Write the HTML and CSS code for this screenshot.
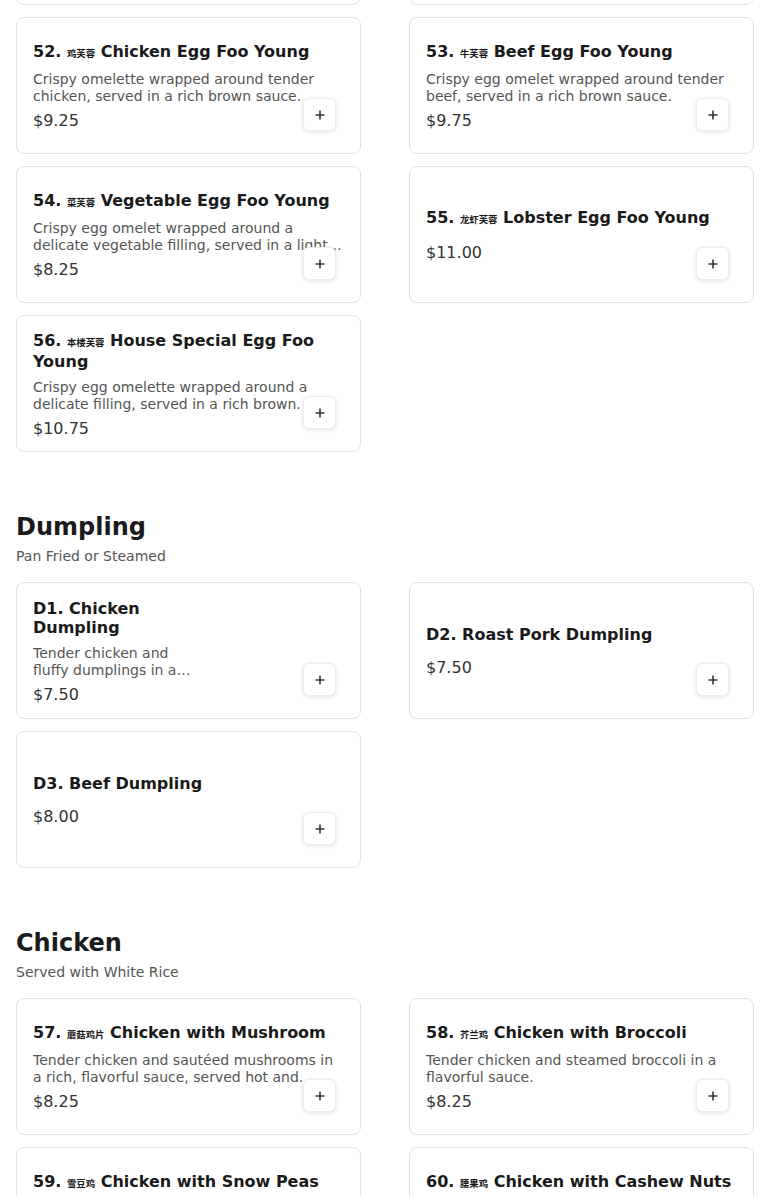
FILE: index.html
```html
<!DOCTYPE html>
<html lang="en">
<head>
    <meta charset="UTF-8">
    <meta name="viewport" content="width=device-width, initial-scale=1.0">
    <title>Menu</title>
    <link rel="stylesheet" href="styles.css">
</head>
<body>
    <main class="menu">
        <section class="menu-section">
            <div class="section-head">
                <h2>Egg Foo Young</h2>
                <p>Served with White Rice</p>
            </div>
            <div class="item-grid">
                <article class="item">
                    <div class="item-info">
                        <h3 class="item-name">50. <span class="zh">虾芙蓉</span> Shrimp Egg Foo Young</h3>
                        <p class="item-desc">Crispy egg omelet wrapped around tender shrimp, served in a rich brown sauce.</p>
                        <div class="item-price">$9.75</div>
                    </div>
                    <button class="add-btn" aria-label="Add"><svg viewBox="0 0 10 10"><path d="M5 0.5v9M0.5 5h9"/></svg></button>
                </article>
                <article class="item">
                    <div class="item-info">
                        <h3 class="item-name">51. <span class="zh">叉烧芙蓉</span> Roast Pork Egg Foo Young</h3>
                        <p class="item-desc">Crispy egg omelet wrapped around roast pork, served in a rich brown sauce.</p>
                        <div class="item-price">$9.25</div>
                    </div>
                    <button class="add-btn" aria-label="Add"><svg viewBox="0 0 10 10"><path d="M5 0.5v9M0.5 5h9"/></svg></button>
                </article>
                <article class="item">
                    <div class="item-info">
                        <h3 class="item-name">52. <span class="zh">鸡芙蓉</span> Chicken Egg Foo Young</h3>
                        <p class="item-desc">Crispy omelette wrapped around tender chicken, served in a rich brown sauce.</p>
                        <div class="item-price">$9.25</div>
                    </div>
                    <button class="add-btn" aria-label="Add"><svg viewBox="0 0 10 10"><path d="M5 0.5v9M0.5 5h9"/></svg></button>
                </article>
                <article class="item">
                    <div class="item-info">
                        <h3 class="item-name">53. <span class="zh">牛芙蓉</span> Beef Egg Foo Young</h3>
                        <p class="item-desc">Crispy egg omelet wrapped around tender beef, served in a rich brown sauce.</p>
                        <div class="item-price">$9.75</div>
                    </div>
                    <button class="add-btn" aria-label="Add"><svg viewBox="0 0 10 10"><path d="M5 0.5v9M0.5 5h9"/></svg></button>
                </article>
                <article class="item">
                    <div class="item-info">
                        <h3 class="item-name">54. <span class="zh">菜芙蓉</span> Vegetable Egg Foo Young</h3>
                        <p class="item-desc">Crispy egg omelet wrapped around a delicate vegetable filling, served in a light brown sauce.</p>
                        <div class="item-price">$8.25</div>
                    </div>
                    <button class="add-btn" aria-label="Add"><svg viewBox="0 0 10 10"><path d="M5 0.5v9M0.5 5h9"/></svg></button>
                </article>
                <article class="item">
                    <div class="item-info">
                        <h3 class="item-name">55. <span class="zh">龙虾芙蓉</span> Lobster Egg Foo Young</h3>
                        <div class="item-price">$11.00</div>
                    </div>
                    <button class="add-btn" aria-label="Add"><svg viewBox="0 0 10 10"><path d="M5 0.5v9M0.5 5h9"/></svg></button>
                </article>
                <article class="item">
                    <div class="item-info">
                        <h3 class="item-name">56. <span class="zh">本楼芙蓉</span> House Special Egg Foo Young</h3>
                        <p class="item-desc">Crispy egg omelette wrapped around a delicate filling, served in a rich brown.</p>
                        <div class="item-price">$10.75</div>
                    </div>
                    <button class="add-btn" aria-label="Add"><svg viewBox="0 0 10 10"><path d="M5 0.5v9M0.5 5h9"/></svg></button>
                </article>
            </div>
        </section>

        <section class="menu-section">
            <div class="section-head">
                <h2>Dumpling</h2>
                <p>Pan Fried or Steamed</p>
            </div>
            <div class="item-grid">
                <article class="item">
                    <div class="item-info item-info--narrow">
                        <h3 class="item-name">D1. Chicken Dumpling</h3>
                        <p class="item-desc">Tender chicken and fluffy dumplings in a savory, comforting broth.</p>
                        <div class="item-price">$7.50</div>
                    </div>
                    <button class="add-btn" aria-label="Add"><svg viewBox="0 0 10 10"><path d="M5 0.5v9M0.5 5h9"/></svg></button>
                </article>
                <article class="item">
                    <div class="item-info">
                        <h3 class="item-name">D2. Roast Pork Dumpling</h3>
                        <div class="item-price">$7.50</div>
                    </div>
                    <button class="add-btn" aria-label="Add"><svg viewBox="0 0 10 10"><path d="M5 0.5v9M0.5 5h9"/></svg></button>
                </article>
                <article class="item">
                    <div class="item-info">
                        <h3 class="item-name">D3. Beef Dumpling</h3>
                        <div class="item-price">$8.00</div>
                    </div>
                    <button class="add-btn" aria-label="Add"><svg viewBox="0 0 10 10"><path d="M5 0.5v9M0.5 5h9"/></svg></button>
                </article>
            </div>
        </section>

        <section class="menu-section">
            <div class="section-head">
                <h2>Chicken</h2>
                <p>Served with White Rice</p>
            </div>
            <div class="item-grid">
                <article class="item">
                    <div class="item-info">
                        <h3 class="item-name">57. <span class="zh">蘑菇鸡片</span> Chicken with Mushroom</h3>
                        <p class="item-desc">Tender chicken and sautéed mushrooms in a rich, flavorful sauce, served hot and.</p>
                        <div class="item-price">$8.25</div>
                    </div>
                    <button class="add-btn" aria-label="Add"><svg viewBox="0 0 10 10"><path d="M5 0.5v9M0.5 5h9"/></svg></button>
                </article>
                <article class="item">
                    <div class="item-info">
                        <h3 class="item-name">58. <span class="zh">芥兰鸡</span> Chicken with Broccoli</h3>
                        <p class="item-desc">Tender chicken and steamed broccoli in a flavorful sauce.</p>
                        <div class="item-price">$8.25</div>
                    </div>
                    <button class="add-btn" aria-label="Add"><svg viewBox="0 0 10 10"><path d="M5 0.5v9M0.5 5h9"/></svg></button>
                </article>
                <article class="item">
                    <div class="item-info">
                        <h3 class="item-name">59. <span class="zh">雪豆鸡</span> Chicken with Snow Peas</h3>
                        <p class="item-desc">Tender chicken stir-fried with crisp snow peas in a light white sauce.</p>
                        <div class="item-price">$8.25</div>
                    </div>
                    <button class="add-btn" aria-label="Add"><svg viewBox="0 0 10 10"><path d="M5 0.5v9M0.5 5h9"/></svg></button>
                </article>
                <article class="item">
                    <div class="item-info">
                        <h3 class="item-name">60. <span class="zh">腰果鸡</span> Chicken with Cashew Nuts</h3>
                        <p class="item-desc">Tender chicken and crunchy cashew nuts in a savory brown sauce.</p>
                        <div class="item-price">$8.25</div>
                    </div>
                    <button class="add-btn" aria-label="Add"><svg viewBox="0 0 10 10"><path d="M5 0.5v9M0.5 5h9"/></svg></button>
                </article>
            </div>
        </section>
    </main>
</body>
</html>
```

FILE: styles.css
```css
body {
    margin: 0;
    background: #fff;
    font-family: "DejaVu Sans", "Noto Sans CJK SC", sans-serif;
    color: #1a1a1a;
}

/* page is scrolled part way into the Egg Foo Young section */
.menu {
    padding: 0 16px;
    margin-top: -201px;
}

.menu-section + .menu-section {
    margin-top: 61px;
}

.section-head {
    margin-bottom: 17px;
}

.section-head h2 {
    margin: 0 0 6px;
    font-size: 24px;
    line-height: 29px;
    font-weight: 700;
    color: #1a1a1a;
}

.section-head p {
    margin: 0;
    font-size: 14px;
    line-height: 17px;
    color: #555;
}

.item-grid {
    display: grid;
    grid-template-columns: 1fr 1fr;
    column-gap: 48px;
    row-gap: 12px;
}

.item {
    position: relative;
    box-sizing: border-box;
    height: 137px;
    padding: 0 16px;
    display: flex;
    flex-direction: column;
    justify-content: center;
    background: #fff;
    border: 1px solid #e3e3e3;
    border-radius: 8px;
}

.item-info {
    display: flex;
    flex-direction: column;
    gap: 8px;
}

.item-info--narrow {
    max-width: 170px;
}

.item-name {
    margin: 0;
    font-size: 16px;
    line-height: 19px;
    font-weight: 700;
    color: #1a1a1a;
}

.zh {
    font-size: 9.4px;
}

.item-desc {
    margin: 0;
    font-size: 14px;
    line-height: 17px;
    color: #555;
    display: -webkit-box;
    -webkit-line-clamp: 2;
    -webkit-box-orient: vertical;
    overflow: hidden;
}

.item-price {
    font-size: 16px;
    line-height: 16px;
    color: #333;
}

/* no description: keep the price a little further down */
.item-name + .item-price {
    margin-top: 8px;
}

.add-btn {
    position: absolute;
    right: 24px;
    bottom: 22px;
    width: 33px;
    height: 33px;
    padding: 0;
    display: flex;
    align-items: center;
    justify-content: center;
    background: #fff;
    border: 1px solid #ececec;
    border-radius: 6px;
    box-shadow: 0 1px 4px rgba(0,0,0,0.12);
    cursor: pointer;
}

.add-btn svg {
    width: 10px;
    height: 10px;
    fill: none;
    stroke: #333;
    stroke-width: 1.6;
}
```
